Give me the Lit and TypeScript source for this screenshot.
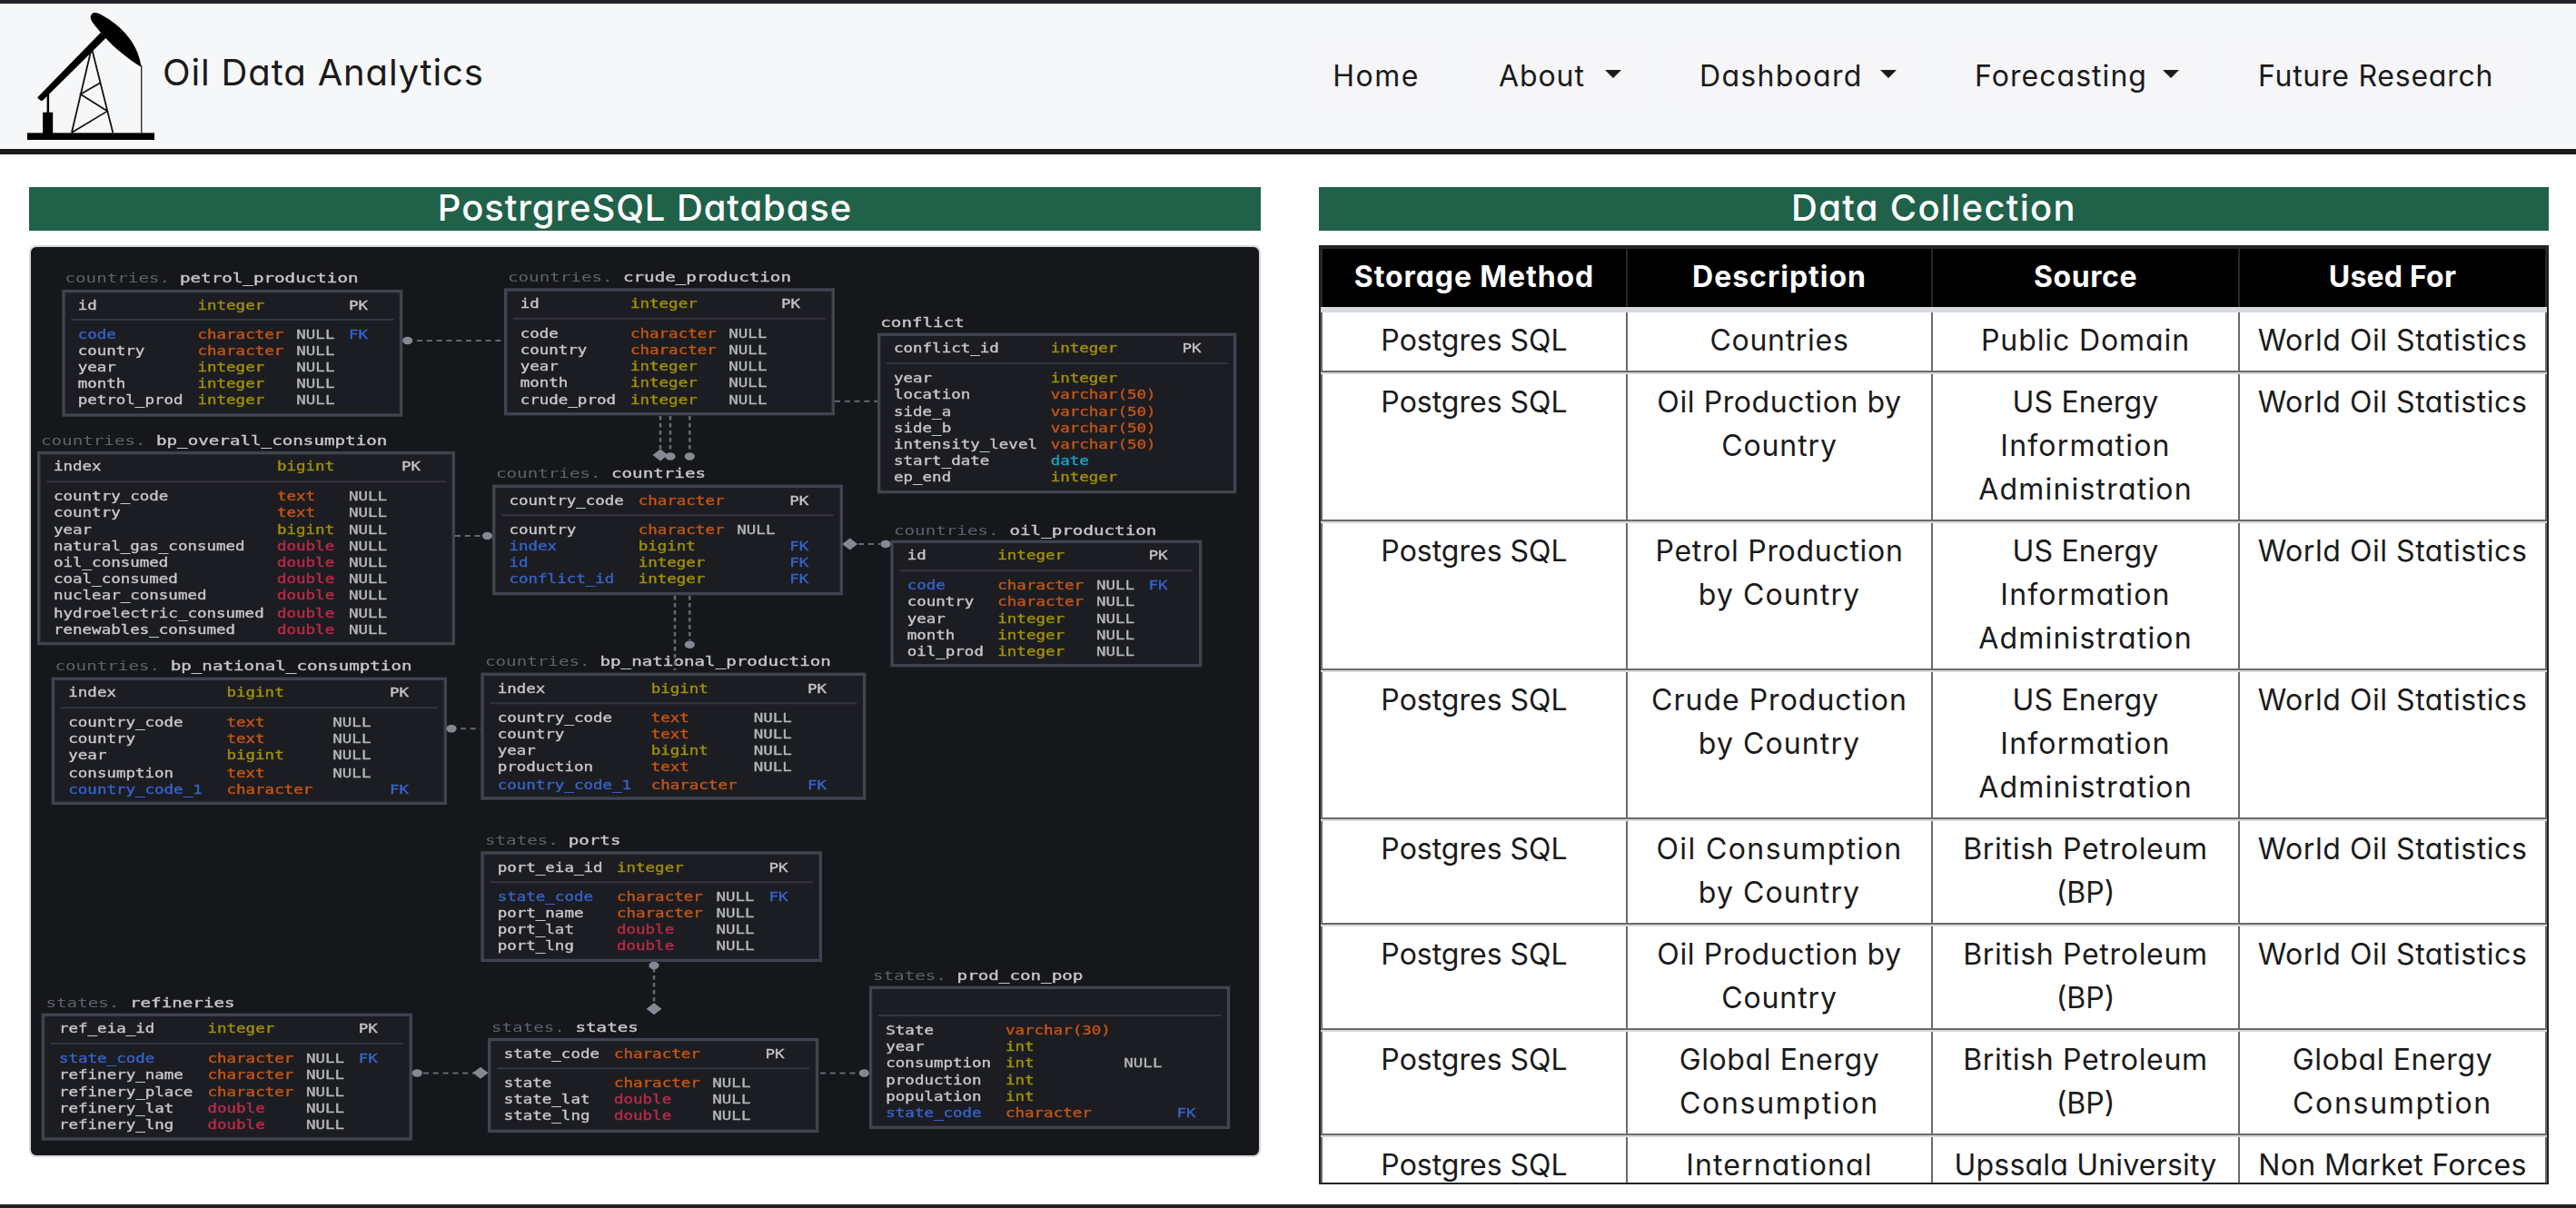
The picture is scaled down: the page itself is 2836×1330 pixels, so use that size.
import { LitElement, html, css, svg } from "lit";
import { customElement } from "lit/decorators.js";

const CW = 10.53;
const TW = 11.56;

type Row = [number, string, string, string, string];
interface Entity {
  schema: string; name: string; tx: number; nx: number; ty: number;
  box: [number, number, number, number]; sep: number;
  cols: [number, number, number, number];
  rows: Row[];
}

const N = "NULL";
const entities: Entity[] = [
  { schema: "countries.", name: "petrol_production", tx: 71.5, nx: 198, ty: 311, box: [68.3, 319.3, 443.3, 458.3], sep: 352,
    cols: [85.7, 217.5, 326.3, 384], rows: [[340.7, "id", "integer", "", "PK"], [373.3, "code", "character", N, "FK"], [391.3, "country", "character", N, ""], [409.3, "year", "integer", N, ""], [427.3, "month", "integer", N, ""], [445.3, "petrol_prod", "integer", N, ""]] },
  { schema: "countries.", name: "bp_overall_consumption", tx: 45, nx: 172, ty: 490.3, box: [41, 497.3, 501, 710], sep: 530.3,
    cols: [59, 305, 384, 442], rows: [[518.3, "index", "bigint", "", "PK"], [550.7, "country_code", "text", N, ""], [569, "country", "text", N, ""], [588.3, "year", "bigint", N, ""], [606.3, "natural_gas_consumed", "double", N, ""], [624.3, "oil_consumed", "double", N, ""], [642.3, "coal_consumed", "double", N, ""], [660, "nuclear_consumed", "double", N, ""], [679.7, "hydroelectric_consumed", "double", N, ""], [697.7, "renewables_consumed", "double", N, ""]] },
  { schema: "countries.", name: "crude_production", tx: 559, nx: 686, ty: 309.5, box: [555, 317.7, 919, 457], sep: 350.7,
    cols: [572.7, 694, 802.3, 860], rows: [[339, "id", "integer", "", "PK"], [371.7, "code", "character", N, ""], [390, "country", "character", N, ""], [407.7, "year", "integer", N, ""], [425.7, "month", "integer", N, ""], [445.3, "crude_prod", "integer", N, ""]] },
  { schema: "countries.", name: "countries", tx: 546, nx: 673, ty: 526, box: [542, 534, 928, 655], sep: 567.3,
    cols: [560.5, 702.7, 811.3, 869.3], rows: [[555.7, "country_code", "character", "", "PK"], [588.3, "country", "character", N, ""], [606.3, "index", "bigint", "", "FK"], [624.3, "id", "integer", "", "FK"], [642.3, "conflict_id", "integer", "", "FK"]] },
  { schema: "", name: "conflict", tx: 0, nx: 969.3, ty: 360, box: [966, 367, 1361.3, 543], sep: 400,
    cols: [984, 1156.7, 1244, 1301.6], rows: [[388, "conflict_id", "integer", "", "PK"], [420.7, "year", "integer", "", ""], [438.7, "location", "varchar(50)", "", ""], [458, "side_a", "varchar(50)", "", ""], [476, "side_b", "varchar(50)", "", ""], [494, "intensity_level", "varchar(50)", "", ""], [512, "start_date", "date", "", ""], [530, "ep_end", "integer", "", ""]] },
  { schema: "countries.", name: "oil_production", tx: 984, nx: 1111.5, ty: 588.5, box: [980.3, 595, 1323.3, 734], sep: 628.3,
    cols: [998.7, 1098.3, 1207, 1264.5], rows: [[616, "id", "integer", "", "PK"], [648.7, "code", "character", N, "FK"], [666.7, "country", "character", N, ""], [685.7, "year", "integer", N, ""], [703.7, "month", "integer", N, ""], [721.7, "oil_prod", "integer", N, ""]] },
  { schema: "countries.", name: "bp_national_consumption", tx: 60.5, nx: 187.7, ty: 738, box: [56.7, 746, 492, 885.7], sep: 779.3,
    cols: [75.3, 249.5, 366.3, 429], rows: [[767.3, "index", "bigint", "", "PK"], [800.3, "country_code", "text", N, ""], [818.3, "country", "text", N, ""], [836, "year", "bigint", N, ""], [855.7, "consumption", "text", N, ""], [873.7, "country_code_1", "character", "", "FK"]] },
  { schema: "countries.", name: "bp_national_production", tx: 534, nx: 660.5, ty: 733, box: [529.3, 741, 953.3, 880.3], sep: 774.3,
    cols: [547.7, 716.7, 829.7, 889], rows: [[762.7, "index", "bigint", "", "PK"], [795.3, "country_code", "text", N, ""], [813.3, "country", "text", N, ""], [831, "year", "bigint", N, ""], [849, "production", "text", N, ""], [868.7, "country_code_1", "character", "", "FK"]] },
  { schema: "states.", name: "ports", tx: 534, nx: 625.7, ty: 930, box: [529.3, 937.7, 905, 1058.7], sep: 971.3,
    cols: [547.7, 679, 788.5, 846.5], rows: [[959.7, "port_eia_id", "integer", "", "PK"], [992.3, "state_code", "character", N, "FK"], [1010.3, "port_name", "character", N, ""], [1028.3, "port_lat", "double", N, ""], [1046.3, "port_lng", "double", N, ""]] },
  { schema: "states.", name: "refineries", tx: 50.5, nx: 143, ty: 1109, box: [45.7, 1116, 454, 1255.3], sep: 1149,
    cols: [65, 228.5, 337, 394.7], rows: [[1137.3, "ref_eia_id", "integer", "", "PK"], [1169.7, "state_code", "character", N, "FK"], [1187.7, "refinery_name", "character", N, ""], [1207, "refinery_place", "character", N, ""], [1225, "refinery_lat", "double", N, ""], [1243, "refinery_lng", "double", N, ""]] },
  { schema: "states.", name: "states", tx: 541, nx: 633.5, ty: 1135.5, box: [537, 1143.3, 901.3, 1246.7], sep: 1176.3,
    cols: [554.7, 676, 784.3, 842.5], rows: [[1164.7, "state_code", "character", "", "PK"], [1197.3, "state", "character", N, ""], [1215.3, "state_lat", "double", N, ""], [1233.3, "state_lng", "double", N, ""]] },
  { schema: "states.", name: "prod_con_pop", tx: 961, nx: 1053.6, ty: 1078.5, box: [956.9, 1086, 1354.2, 1242.7], sep: 1118,
    cols: [975.3, 1107, 1237.3, 1295.5], rows: [[1139, "State", "varchar(30)", "", ""], [1156.7, "year", "int", "", ""], [1174.7, "consumption", "int", N, ""], [1194.3, "production", "int", "", ""], [1212.3, "population", "int", "", ""], [1230, "state_code", "character", "", "FK"]] },
];

const hLinks: [number, number, number][] = [
  [459, 555, 375], [501, 531, 590], [919, 966, 441.7], [945, 969, 599],
  [507, 529, 802.3], [466, 522, 1181.5], [903, 945, 1181.5],
];
const vLinks: [number, number, number][] = [
  [727, 458, 496], [738, 458, 498], [759.3, 458, 498], [743, 656, 738], [759.3, 656, 705], [720, 1066, 1104],
];
const dots: [number, number][] = [
  [448.7, 375], [536.5, 590], [738, 502.5], [759.3, 502.5], [975, 599], [759.3, 709.7],
  [497, 802.3], [720, 1063], [459.3, 1181.5], [951.3, 1181.5],
];
const diamonds: [number, number][] = [[727, 501], [935.7, 599], [720, 1110.7], [529, 1181.3]];

const typeClass = (t: string) =>
  t === "double" ? "dbl" : t === "date" ? "date" : /int/.test(t) ? "int" : "str";

@customElement("schema-diagram")
export class SchemaDiagram extends LitElement {
  static styles = css`
    :host { display: block; }
    svg { display: block; width: 100%; height: 100%; filter: blur(0.45px); }
    text {
      font-family: "DejaVu Sans Mono", "Liberation Mono", monospace; font-size: 13.9px;
      fill: currentColor; stroke: currentColor; stroke-width: 0.35px;
    }
    .schema { color: #60626c; stroke-width: 0; }
    .name, .field { color: #c6c7cb; }
    .null { color: #b4b6ba; }
    .key { color: #c2c3c7; }
    .fk { color: #3563ca; }
    .int { color: #a09008; }
    .str { color: #c65512; }
    .dbl { color: #bd2a48; }
    .date { color: #1ba3c0; }
    .box { fill: #1c1d22; stroke: #42434f; stroke-width: 3.4; }
    .sep { stroke: #35363d; stroke-width: 2; }
    .link { stroke: #666870; stroke-width: 2; }
    .h { stroke-dasharray: 6 4.8; }
    .v { stroke-dasharray: 4.5 3.5; stroke-width: 2.6; }
    .mark { fill: #868993; }
  `;

  private label(x: number, y: number, s: string, cls: string, w = CW) {
    return s
      ? svg`<text class=${cls} x=${x} y=${y} textLength=${(s.length * w).toFixed(2)} lengthAdjust="spacingAndGlyphs">${s}</text>`
      : "";
  }

  private entity(e: Entity) {
    const [x1, y1, x2, y2] = e.box;
    return svg`
      ${this.label(e.tx, e.ty, e.schema, "schema", TW)}
      ${this.label(e.nx, e.ty, e.name, "name", TW)}
      <rect class="box" x=${x1 + 1.7} y=${y1 + 1.3} width=${x2 - x1 - 3.4} height=${y2 - y1 - 2.6}></rect>
      <line class="sep" x1=${x1 + 10} x2=${x2 - 10} y1=${e.sep} y2=${e.sep}></line>
      ${e.rows.map(([y, f, t, n, k]) => svg`
        ${this.label(e.cols[0], y, f, k === "FK" ? "fk" : "field")}
        ${this.label(e.cols[1], y, t, typeClass(t))}
        ${this.label(e.cols[2], y, n, "null")}
        ${this.label(e.cols[3], y, k, k === "FK" ? "fk" : "key")}`)}
    `;
  }

  render() {
    return html`<svg viewBox="34 272 1352 1000" preserveAspectRatio="none">
      ${entities.map((e) => this.entity(e))}
      ${hLinks.map(([a, b, y]) => svg`<line class="link h" x1=${a} x2=${b} y1=${y} y2=${y}></line>`)}
      ${vLinks.map(([x, a, b]) => svg`<line class="link v" x1=${x} x2=${x} y1=${a} y2=${b}></line>`)}
      ${dots.map(([x, y]) => svg`<ellipse class="mark" cx=${x} cy=${y} rx="5.6" ry="4.2"></ellipse>`)}
      ${diamonds.map(([x, y]) => svg`<path class="mark" d="M${x - 8.5} ${y}L${x} ${y - 6.5}L${x + 8.5} ${y}L${x} ${y + 6.5}Z"></path>`)}
    </svg>`;
  }
}

/* Letter-spacing in px for each label. */
const tracking: Record<string, number> = {
  "Home": 1.5, "About": 0.9, "Dashboard": 1.3, "Forecasting": 1.05, "Future Research": 0.75,
  "Countries": 0.7, "Public Domain": 0.9, "World Oil Statistics": 0.55, "Oil Production by": 0.6,
  "Petrol Production": 0.7, "Crude Production": 1, "Oil Consumption": 1.4, "British Petroleum": 0.7,
  "Upssala University": 0.2, "Non Market Forces": 0.35, "International": 1.1, "Global Energy": 0.6,
  "Consumption": 1.7, "by Country": 1.1, "Country": 0.9, "US Energy": 0.2, "Information": 1.2,
  "Administration": 1.2, "Storage Method": 0.9, "Description": 1, "Source": 0.6, "Used For": 0.2,
};
const spaced = (t: string) => html`<span style="letter-spacing:${tracking[t] ?? 0}px">${t}</span>`;

const sources: string[][][] = [
  [["Postgres SQL"], ["Countries"], ["Public Domain"], ["World Oil Statistics"]],
  [["Postgres SQL"], ["Oil Production by", "Country"], ["US Energy", "Information", "Administration"], ["World Oil Statistics"]],
  [["Postgres SQL"], ["Petrol Production", "by Country"], ["US Energy", "Information", "Administration"], ["World Oil Statistics"]],
  [["Postgres SQL"], ["Crude Production", "by Country"], ["US Energy", "Information", "Administration"], ["World Oil Statistics"]],
  [["Postgres SQL"], ["Oil Consumption", "by Country"], ["British Petroleum", "(BP)"], ["World Oil Statistics"]],
  [["Postgres SQL"], ["Oil Production by", "Country"], ["British Petroleum", "(BP)"], ["World Oil Statistics"]],
  [["Postgres SQL"], ["Global Energy", "Consumption"], ["British Petroleum", "(BP)"], ["Global Energy", "Consumption"]],
  [["Postgres SQL"], ["International"], ["Upssala University"], ["Non Market Forces"]],
];

@customElement("app-root")
export class AppRoot extends LitElement {
  static styles = css`
    :host {
      display: block; box-sizing: border-box; width: 2836px; height: 1330px; overflow: hidden;
      border-top: 4px solid #22232a; border-bottom: 4px solid #222126; background: #fff;
      font-family: Inter, "Open Sans", sans-serif; font-size: 32px; color: #1a1a1b;
      font-feature-settings: "cv11";
    }
    * { box-sizing: border-box; }
    header { height: 166px; display: flex; align-items: flex-start; background: #f6f7f9; border-bottom: 6px solid #1a1a1b; padding: 0 68px 0 30px; }
    .logo { flex: none; width: 140px; height: 142px; margin-top: 8px; }
    .brand { font-size: 40px; line-height: 60px; margin: 46px auto 0 9px; letter-spacing: 0.85px; white-space: nowrap; }
    nav { display: flex; flex: none; gap: 42px; margin-top: 42px; }
    .item { height: 74px; padding: 0 22px; display: flex; align-items: center; justify-content: center; background: #f6f6f8; border-radius: 8px; white-space: nowrap; }
    .item:has(.caret) { justify-content: space-between; }
    .w0 { width: 142px; } .w1 { width: 179px; } .w2 { width: 261px; } .w3 { width: 269px; } .w4 { width: 305px; }
    .caret { border: 9.6px solid transparent; border-top-color: currentColor; border-bottom: 0; margin-top: -4px; }
    main { display: grid; grid-template-columns: 1356px 1354px; column-gap: 64px; padding: 36px 30px 0 32px; }
    h2 { margin: 0 0 16px; height: 48px; line-height: 46px; background: #20614a; color: #fff; font-size: 40px; font-weight: 500; text-align: center; }
    .t1 { letter-spacing: 0.9px; }
    .t2 { letter-spacing: 1.3px; }
    schema-diagram { height: 1004px; border: 2px solid #d6d8db; border-radius: 8px; background: #16171b; overflow: hidden; }
    .table { height: 1034px; overflow: hidden; border: 2px solid #212225; text-align: center; }
    .row { display: grid; grid-template-columns: 336px 336px 338px 338px; border-left: 2px solid #6b6b6c; }
    .cell { border-right: 2px solid #6b6b6c; padding: 7px 0 9px; line-height: 48px; white-space: nowrap; }
    .rule { height: 4px; border-top: 2px solid #6b6b6c; background: #d6d9dc; }
    .head { background: #000; color: #fff; font-weight: 700; border: solid #25282b; border-width: 2px 0 0 2px; }
    .head .cell { border-color: #25282b; }
    .thick { height: 6px; background: #d6dadf; }
  `;

  render() {
    const nav: [string, boolean][] = [["Home", false], ["About", true], ["Dashboard", true], ["Forecasting", true], ["Future Research", false]];
    return html`
      <header>
        <svg class="logo" viewBox="84 36 392 426" preserveAspectRatio="none">
          <rect x="84" y="439" width="392" height="23"></rect>
          <rect x="132" y="371" width="31" height="72"></rect>
          <path d="M148 310V372" stroke="#000" stroke-width="7"></path>
          <path d="M116 321L310 108L328 124L133 331Q128 336 124 331L117 325Z"></path>
          <path d="M279 58C279 44 290 38 304 44C360 74 424 130 436 222C396 196 350 156 324 124L309 106C297 88 282 76 279 58Z"></path>
          <path d="M436 215V440" stroke="#333" stroke-width="4"></path>
          <path d="M281 165L221 438M284 165L348 438M309 274L248 311L331 367L221 438" fill="none" stroke="#111" stroke-width="5"></path>
        </svg>
        <div class="brand">Oil Data Analytics</div>
        <nav>${nav.map(([t, c], i) => html`<div class="item w${i}">${spaced(t)}${c ? html`<i class="caret"></i>` : ""}</div>`)}</nav>
      </header>
      <main>
        <section><h2 class="t1">PostrgreSQL Database</h2><schema-diagram></schema-diagram></section>
        <section>
          <h2 class="t2">Data Collection</h2>
          <div class="table">
            <div class="row head">${["Storage Method", "Description", "Source", "Used For"].map((t) => html`<div class="cell">${spaced(t)}</div>`)}</div>
            <div class="thick"></div>
            ${sources.map((r) => html`
              <div class="row">${r.map((c) => html`<div class="cell">${c.map((l) => html`<div>${spaced(l)}</div>`)}</div>`)}</div>
              <div class="rule"></div>`)}
          </div>
        </section>
      </main>`;
  }
}
